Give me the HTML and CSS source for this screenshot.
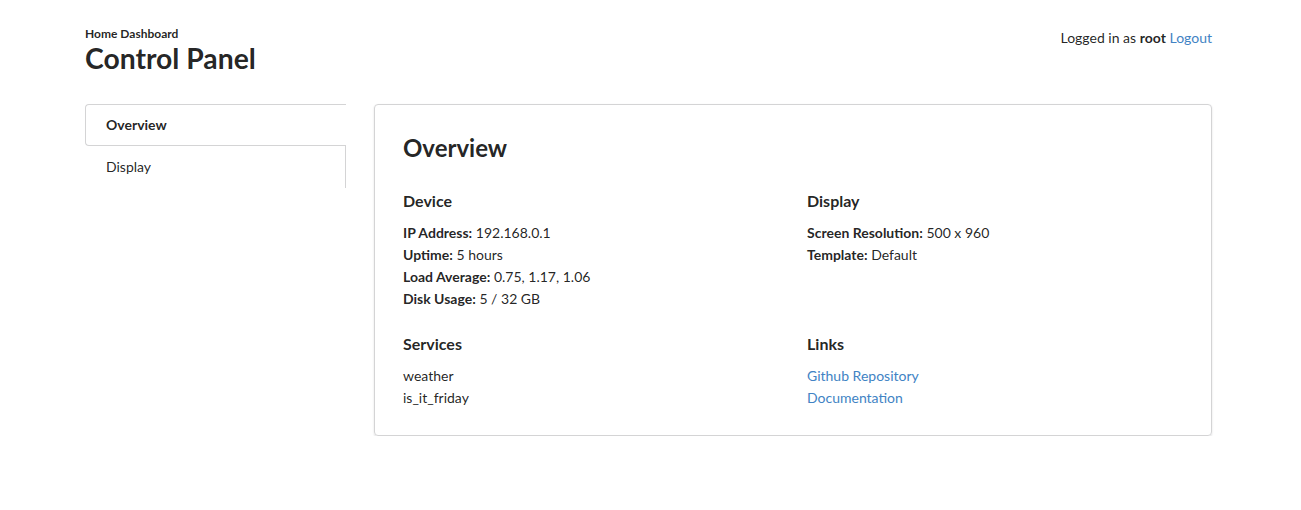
FILE: index.html
```html
<!DOCTYPE html>
<html>
<head>
<meta charset="utf-8">
<link rel="stylesheet" href="styles.css">
</head>
<body>
<div class="container">
  <header class="top">
    <div class="titles">
      <div class="subtitle">Home Dashboard</div>
      <h1 class="title">Control Panel</h1>
    </div>
    <div class="user">Logged in as <b>root</b> <a href="#">Logout</a></div>
  </header>
  <div class="main">
    <nav class="menu">
      <a class="item active" href="#">Overview</a>
      <a class="item" href="#">Display</a>
    </nav>
    <section class="card">
      <h2 class="card-title">Overview</h2>
      <div class="grid">
        <div class="col">
          <h3 class="sec">Device</h3>
          <div class="row"><b>IP Address:</b> 192.168.0.1</div>
          <div class="row"><b>Uptime:</b> 5 hours</div>
          <div class="row"><b>Load Average:</b> 0.75, 1.17, 1.06</div>
          <div class="row"><b>Disk Usage:</b> 5 / 32 GB</div>
        </div>
        <div class="col">
          <h3 class="sec">Display</h3>
          <div class="row"><b>Screen Resolution:</b> 500 x 960</div>
          <div class="row"><b>Template:</b> Default</div>
        </div>
        <div class="col">
          <h3 class="sec">Services</h3>
          <div class="row">weather</div>
          <div class="row">is_it_friday</div>
        </div>
        <div class="col">
          <h3 class="sec">Links</h3>
          <div class="row"><a href="#">Github Repository</a></div>
          <div class="row"><a href="#">Documentation</a></div>
        </div>
      </div>
    </section>
  </div>
</div>
</body>
</html>
```

FILE: styles.css
```css
* { box-sizing: border-box; }
html, body { margin: 0; padding: 0; background: #fff; }
body {
  font-family: Lato, "Helvetica Neue", Arial, sans-serif;
  font-size: 14px;
  color: rgba(0,0,0,0.87);
}
a { color: #4183c4; text-decoration: none; }
.container {
  width: 1127px;
  margin-left: 85px;
  padding-top: 27px;
}
.top {
  display: flex;
  justify-content: space-between;
  align-items: flex-start;
}
.subtitle {
  font-size: 12px;
  font-weight: 700;
  line-height: 14px;
}
.title {
  margin: 0;
  font-size: 28.3px;
  font-weight: 700;
  line-height: 34px;
}
.user {
  padding-top: 2px;
  line-height: 18px;
}
.main {
  display: flex;
  align-items: flex-start;
  gap: 28px;
  margin-top: 29px;
}
.menu {
  width: 261px;
  flex: none;
  display: flex;
  flex-direction: column;
  border-right: 1px solid #d4d4d5;
}
.menu .item {
  display: block;
  padding: 12px 20px;
  line-height: 16px;
  color: rgba(0,0,0,0.87);
  border: 1px solid transparent;
  border-right: none;
}
.menu .item.active {
  font-weight: 700;
  background: #fff;
  border-color: #d4d4d5;
  border-radius: 4px 0 0 4px;
  margin-right: -1px;
}
.card {
  flex: 1;
  border: 1px solid #d4d4d5;
  border-radius: 4px;
  box-shadow: 0 1px 2px 0 rgba(34,36,38,0.15);
  padding: 27px 28px 26px;
}
.card-title {
  margin: 0 0 27px;
  font-size: 24px;
  font-weight: 700;
  line-height: 31px;
}
.grid {
  display: grid;
  grid-template-columns: 1fr 1fr;
  column-gap: 28px;
  row-gap: 23px;
}
.sec {
  margin: 0 0 11px;
  font-size: 16px;
  font-weight: 700;
  line-height: 21px;
}
.row {
  line-height: 22px;
}
```
